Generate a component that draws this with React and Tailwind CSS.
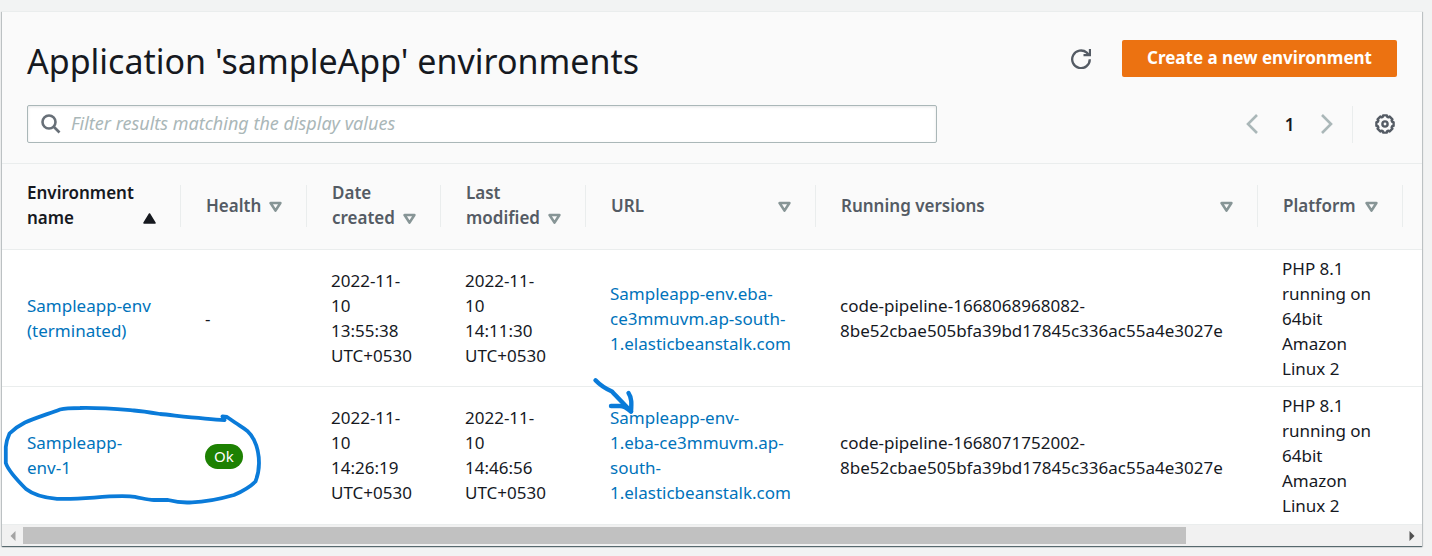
const GEAR_TEETH = 8;

function gearPath() {
  const points = [];
  for (let i = 0; i < GEAR_TEETH; i++) {
    const mid = (i * 2 * Math.PI) / GEAR_TEETH;
    for (const [offset, radius] of [[-0.3, 7.5], [-0.22, 8.8], [0.22, 8.8], [0.3, 7.5]]) {
      points.push(
        `${(10 + radius * Math.sin(mid + offset)).toFixed(2)} ${(10 - radius * Math.cos(mid + offset)).toFixed(2)}`
      );
    }
  }
  return `M${points.join("L")}Z`;
}

const GEAR = gearPath();

const columns = [
  { label: ["Environment", "name"], sorted: true },
  { label: ["Health"] },
  { label: ["Date", "created"] },
  { label: ["Last", "modified"] },
  { label: ["URL"] },
  { label: ["Running versions"] },
  { label: ["Platform"] },
];

const rows = [
  {
    name: ["Sampleapp-env", "(terminated)"],
    health: null,
    created: ["2022-11-", "10", "13:55:38", "UTC+0530"],
    modified: ["2022-11-", "10", "14:11:30", "UTC+0530"],
    url: ["Sampleapp-env.eba-", "ce3mmuvm.ap-south-", "1.elasticbeanstalk.com"],
    version: ["code-pipeline-1668068968082-", "8be52cbae505bfa39bd17845c336ac55a4e3027e"],
    platform: ["PHP 8.1", "running on", "64bit", "Amazon", "Linux 2"],
  },
  {
    name: ["Sampleapp-", "env-1"],
    health: "Ok",
    created: ["2022-11-", "10", "14:26:19", "UTC+0530"],
    modified: ["2022-11-", "10", "14:46:56", "UTC+0530"],
    url: ["Sampleapp-env-", "1.eba-ce3mmuvm.ap-", "south-", "1.elasticbeanstalk.com"],
    version: ["code-pipeline-1668071752002-", "8be52cbae505bfa39bd17845c336ac55a4e3027e"],
    platform: ["PHP 8.1", "running on", "64bit", "Amazon", "Linux 2"],
  },
];

function Lines({ text }) {
  return text.map((line) => (
    <span key={line} className="block whitespace-nowrap">
      {line}
    </span>
  ));
}

function SortIcon({ filled }) {
  return filled ? (
    <svg className="h-[25px] w-[13px] shrink-0" viewBox="0 0 13 25" aria-hidden="true">
      <path d="M6.5 9 L12 18 H1 Z" fill="#16191f" stroke="#16191f" strokeWidth="1.5" strokeLinejoin="round" />
    </svg>
  ) : (
    <svg className="h-[25px] w-[13px] shrink-0" viewBox="0 0 13 25" aria-hidden="true">
      <path d="M1.600 10 H11.400 L6.500 17.600 Z" fill="none" stroke="#879596" strokeWidth="2.6" strokeLinejoin="round" />
    </svg>
  );
}

function HeaderCell({ column }) {
  return (
    <th scope="col" aria-sort={column.sorted ? "ascending" : "none"} className="pt-[21px] pb-[22px] font-semibold">
      <div className="flex h-[42px] items-center border-r border-[#eaeded] pr-6 pb-[2px] pl-[25px]">
        <button
          type="button"
          className={
            column.sorted
              ? "flex flex-1 items-end justify-between text-left text-[#16191f]"
              : "flex flex-1 items-end justify-between text-left text-[#545b64]"
          }
        >
          <span>
            <Lines text={column.label} />
          </span>
          <SortIcon filled={column.sorted} />
        </button>
      </div>
    </th>
  );
}

function Row({ row }) {
  return (
    <tr className="border-t border-[#eaeded]">
      <td className="py-[6px] pl-[25px]">
        <a href="#environment" className="text-[#0073bb]">
          <Lines text={row.name} />
        </a>
      </td>
      <td className="py-[6px] pl-6">
        {row.health ? (
          <span className="mt-[2px] inline-block rounded-full bg-[#1d8102] px-[9px] text-[15px] leading-[25px] text-white">
            {row.health}
          </span>
        ) : (
          "-"
        )}
      </td>
      <td className="py-[6px] pl-6">
        <Lines text={row.created} />
      </td>
      <td className="py-[6px] pl-6">
        <Lines text={row.modified} />
      </td>
      <td className="py-[6px] pl-6">
        <a href="#url" className="text-[#0073bb]">
          <Lines text={row.url} />
        </a>
      </td>
      <td className="py-[6px] pl-6">
        <Lines text={row.version} />
      </td>
      <td className="pt-[6px] pb-[5px] pl-6">
        <Lines text={row.platform} />
      </td>
      <td />
    </tr>
  );
}

function HorizontalScroll() {
  return (
    <div className="flex h-[22px] items-center border-t border-[#eaeded] bg-[#f1f1f1]">
      <button type="button" aria-label="Scroll left" className="flex w-[21px] justify-center">
        <svg width="6" height="10" viewBox="0 0 6 10" aria-hidden="true">
          <path d="M5.5 0 V10 L0.5 5 Z" fill="#a3a3a3" />
        </svg>
      </button>
      <div className="flex-1">
        <div className="h-[17px] w-27/32 bg-[#c1c1c1]" />
      </div>
      <button type="button" aria-label="Scroll right" className="flex w-[21px] justify-center">
        <svg width="6" height="10" viewBox="0 0 6 10" aria-hidden="true">
          <path d="M0.5 0 V10 L5.5 5 Z" fill="#505050" />
        </svg>
      </button>
    </div>
  );
}

function Annotations() {
  return (
    <svg
      className="pointer-events-none absolute top-0 left-0"
      width="700"
      height="556"
      viewBox="0 0 700 556"
      fill="none"
      stroke="#0a7bd9"
      strokeWidth="3.8"
      strokeLinecap="round"
      strokeLinejoin="round"
      aria-hidden="true"
    >
      <path d="M222.5 416.5 L224.5 420 C206 419 180 416 160 414 C148 412 142 411 134 410.500 C116 409 100 407.500 80 408 Q66 408 60 409.500 C48 414 35 418 25 422.500 Q16 427 9.500 433.500 Q6.500 440 5.800 447 V463 C8 470 17 480 26 489 C35 496 46 498 57 498.800 C84 500 105 495 130 496.400 C139 497 146 500 154 500 H168 C176 502 183 503 192 502.300 C205 502 220 499 234 495 C243 491 250 487 255.500 481.500 C258 475 259 468 259 463 C259 453 258 448 254 440 C249 430 243 428 235 422.500 L227 417 L222.500 416.500" />
      <path d="M595.500 380.300 C600 385 606 389 612 391.500 C618 398 624 404 631 411.500" strokeWidth="4.4" />
      <path d="M611 406 H620 C625 406 628 409 631 411.500 C631.500 404 632 398 628.500 393" strokeWidth="4.4" />
    </svg>
  );
}

export default function App() {
  return (
    <div className="relative min-h-screen bg-[#f2f3f3] pt-[11px] pr-[10px] pb-[9px] pl-[2px] font-['Noto_Sans','Open_Sans',sans-serif] text-[17px] leading-[25px] text-[#16191f]">
      <main className="border-t border-[#eaeded] bg-white shadow-[0_1px_1px_0_rgba(0,28,36,0.5),1px_1px_1px_0_rgba(0,28,36,0.15),-1px_1px_1px_0_rgba(0,28,36,0.15)]">
        <header className="border-b border-[#eaeded] bg-[#fafafa] px-[25px] pt-7 pb-5">
          <div className="flex h-[37px] items-center">
            <h1 className="mt-1 flex-1 text-[34px] leading-[44px] whitespace-nowrap">Application 'sampleApp' environments</h1>
            <button type="button" aria-label="Refresh" className="mr-[31px]">
              <svg width="20" height="20" viewBox="0 0 20 20" fill="none" stroke="#545b64" strokeWidth="2.300" aria-hidden="true">
                <path d="M18.800 10.300 A8.800 8.800 0 1 1 15.800 3.700 L18 6" />
                <path d="M19 0 V6.200 H12.500" />
              </svg>
            </button>
            <button type="button" className="h-[37px] rounded-[2px] bg-[#ec7211] px-[25px] pb-[2px] font-bold whitespace-nowrap text-white">
              Create a new environment
            </button>
          </div>
          <div className="mt-7 flex h-[38px] items-center">
            <div className="flex h-[38px] w-[910px] items-center rounded-[2px] border border-[#aab7b8] bg-white pl-[13px] shadow-[inset_0_1px_3px_rgba(0,7,22,0.1)]">
              <svg width="20" height="20" viewBox="0 0 20 20" fill="none" stroke="#687078" strokeWidth="2.600" aria-hidden="true">
                <circle cx="8" cy="8" r="6.500" />
                <path d="M12.500 12.500 L18.500 18.500" />
              </svg>
              <input
                type="text"
                aria-label="Filter results matching the display values"
                placeholder="Filter results matching the display values"
                className="ml-[10px] flex-1 bg-transparent pb-[2px] text-[18px] italic outline-none placeholder:text-[#aab7b8]"
              />
            </div>
            <nav aria-label="Pages" className="ml-auto flex items-center">
              <button type="button" aria-label="Previous page">
                <svg width="12" height="20" viewBox="0 0 12 20" fill="none" stroke="#aab7b8" strokeWidth="2.600" aria-hidden="true">
                  <path d="M11 1 L2 10 L11 19" />
                </svg>
              </button>
              <button type="button" aria-current="page" className="w-[63px] text-center font-semibold">
                1
              </button>
              <button type="button" aria-label="Next page">
                <svg width="12" height="20" viewBox="0 0 12 20" fill="none" stroke="#aab7b8" strokeWidth="2.600" aria-hidden="true">
                  <path d="M1 1 L10 10 L1 19" />
                </svg>
              </button>
            </nav>
            <div className="mr-[2px] ml-[19px] flex h-[37px] items-center border-l border-[#eaeded] pl-[22px]">
              <button type="button" aria-label="Preferences">
                <svg width="20" height="20" viewBox="0 0 20 20" fill="none" stroke="#545b64" strokeWidth="2.400" strokeLinejoin="round" aria-hidden="true">
                  <path d={GEAR} />
                  <circle cx="10" cy="10" r="2.600" />
                </svg>
              </button>
            </div>
          </div>
        </header>
        <div className="overflow-hidden pb-px">
          <table className="w-full table-fixed border-collapse text-left">
            <colgroup>
              <col className="w-[179px]" />
              <col className="w-[126px]" />
              <col className="w-[134px]" />
              <col className="w-[145px]" />
              <col className="w-[230px]" />
              <col className="w-[442px]" />
              <col className="w-[145px]" />
              <col />
            </colgroup>
            <thead className="bg-[#fafafa]">
              <tr>
                {columns.map((column) => (
                  <HeaderCell key={column.label.join(" ")} column={column} />
                ))}
                <td />
              </tr>
            </thead>
            <tbody>
              {rows.map((row) => (
                <Row key={row.name.join(" ")} row={row} />
              ))}
            </tbody>
          </table>
        </div>
        <HorizontalScroll />
      </main>
      <Annotations />
    </div>
  );
}
